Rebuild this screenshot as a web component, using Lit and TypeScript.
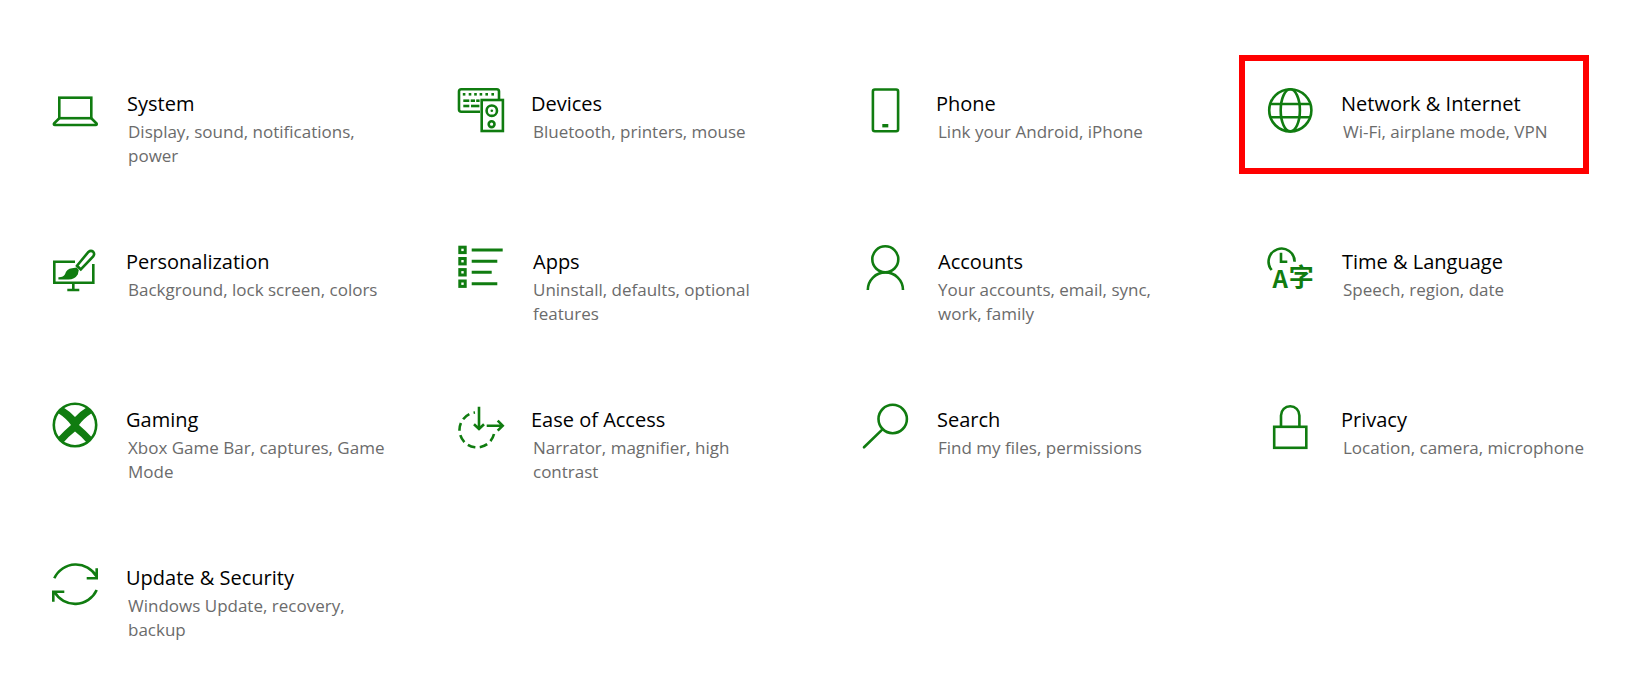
import { LitElement, html, css, svg } from "lit";
import { customElement } from "lit/decorators.js";

const icons = {
  system: svg`<rect x="9.3" y="12.7" width="32" height="20.5"/><path d="M9.3 33.2 4.2 38.2Q3.2 40 5 40H45.6Q47.4 40 46.4 38.2L41.3 33.2"/>`,
  devices: svg`<path d="M25 26.7H6.2Q4 26.7 4 24.5V6.5Q4 4.3 6.2 4.3H41.8Q44 4.3 44 6.5V14"/><rect x="26.7" y="15" width="21.2" height="31"/><circle cx="36.8" cy="25.7" r="5.2"/><circle cx="36.6" cy="39.2" r="2.9"/>
    <g class="fill"><rect x="7.8" y="8" width="2.6" height="2.6"/><rect x="13.7" y="8" width="2.6" height="2.6"/><rect x="19.2" y="8" width="2.6" height="2.6"/><rect x="24.6" y="8" width="2.6" height="2.6"/><rect x="30.4" y="8" width="2.6" height="2.6"/><rect x="36.4" y="8" width="2.6" height="2.6"/><rect x="8.3" y="14.4" width="6" height="2.6"/><rect x="15.7" y="14.4" width="4.3" height="2.6"/><rect x="21.2" y="14.4" width="3.4" height="2.6"/><rect x="8.3" y="19.7" width="6" height="2.6"/><rect x="16" y="19.7" width="8.4" height="2.6"/><circle cx="36.8" cy="25.7" r="1.3"/></g>`,
  phone: svg`<rect x="12.9" y="4.5" width="25.2" height="41.8" rx="2"/><rect class="fill" x="22.3" y="39" width="6" height="3.4"/>`,
  network: svg`<circle cx="25.3" cy="25.3" r="21.1"/><ellipse cx="25.3" cy="25.3" rx="9.6" ry="21.1"/><path d="M5.4 19H45.2M5.4 32.3H45.2"/>`,
  personalization: svg`<path d="M25 18.7H4.3V39.7H43.3V21M23.3 40V47M17.3 47H29.3"/><path d="M27 22.8 38.4 8.9Q41 6.7 43.2 8.8 45 11 43.2 13.4L30.8 26.5Z"/><path class="fill" d="M8.4 34.2Q13.4 34.4 15 31.2 16.6 25.5 22 25.2L26.7 24.5 28.8 27 27.8 31.5Q24.5 36.8 18 36.6H8.4Z"/>`,
  apps: svg`<g class="thick"><rect x="4.8" y="4.2" width="5.4" height="5.4"/><rect x="4.8" y="15.5" width="5.4" height="5.4"/><rect x="4.8" y="26.6" width="5.4" height="5.4"/><rect x="4.8" y="38" width="5.4" height="5.4"/><path d="M16.7 7H47.7M16.7 18.3H42.3M16.7 29.3H36.7M16.7 40.7H42.3"/></g>`,
  accounts: svg`<circle cx="25.3" cy="16.3" r="13"/><path d="M7.8 47A17.6 17.6 0 0 1 43 47"/>`,
  time: svg`<path d="M6.7 27A13 13 0 1 1 29.6 18.7M16 9.7V18.7H22.3"/><text class="glyph" x="7.6" y="45.2" font-size="24">A</text><text class="glyph" x="23.8" y="43" font-size="25">字</text>`,
  gaming: svg`<circle cx="25" cy="24" r="21.2"/><path class="fill" d="M25 16Q20 10.5 13.5 6.5L8 12Q16.5 17.5 21 24 14.5 29.5 8 36.5L13 42Q19 35 25 30.5 31 35 37 42L42 36.5Q35.5 29.5 29 24 33.5 17.5 42 12L36.5 6.5Q30 10.5 25 16Z"/>`,
  ease: svg`<path stroke-dasharray="8 4.4" d="M39 33A17.5 17.5 0 1 1 20 11.5"/><path d="M24 5.7V27.3M19 23.3 24 28 29 23.3M31.7 24.7H47.3M42.7 19.7 47.7 24.7 42.7 29.7"/>`,
  search: svg`<circle cx="32.7" cy="18" r="14.2"/><path stroke-linecap="round" d="M22.2 28.6 4 46.3"/>`,
  privacy: svg`<rect x="9.2" y="25.8" width="32.1" height="21"/><path d="M16 25.8V14.4A9.2 9.2 0 0 1 34.4 14.4V25.8"/>`,
  update: svg`<path d="M4.3 19.3A23.8 23.8 0 0 1 46.7 17.7M46.7 9.3V19.3H36.7M46.7 31A23.8 23.8 0 0 1 4.3 32.7M14.3 32.7H3.3V42.7"/>`,
};

type Item = { icon: keyof typeof icons; title: string; lines: string[]; selected?: boolean; dx?: number };

const items: Item[] = [
  { icon: "system", title: "System", lines: ["Display, sound, notifications,", "power"], dx: 1 },
  { icon: "devices", title: "Devices", lines: ["Bluetooth, printers, mouse"] },
  { icon: "phone", title: "Phone", lines: ["Link your Android, iPhone"] },
  { icon: "network", title: "Network & Internet", lines: ["Wi-Fi, airplane mode, VPN"], selected: true },
  { icon: "personalization", title: "Personalization", lines: ["Background, lock screen, colors"] },
  { icon: "apps", title: "Apps", lines: ["Uninstall, defaults, optional", "features"], dx: 2 },
  { icon: "accounts", title: "Accounts", lines: ["Your accounts, email, sync,", "work, family"], dx: 2 },
  { icon: "time", title: "Time & Language", lines: ["Speech, region, date"], dx: 1 },
  { icon: "gaming", title: "Gaming", lines: ["Xbox Game Bar, captures, Game", "Mode"] },
  { icon: "ease", title: "Ease of Access", lines: ["Narrator, magnifier, high", "contrast"] },
  { icon: "search", title: "Search", lines: ["Find my files, permissions"], dx: 1 },
  { icon: "privacy", title: "Privacy", lines: ["Location, camera, microphone"] },
  { icon: "update", title: "Update & Security", lines: ["Windows Update, recovery,", "backup"] },
];

@customElement("app-root")
export class AppRoot extends LitElement {
  static styles = css`
    :host {
      display: block;
      min-height: 696px;
      background: #fff;
      font-family: "Open Sans", "Noto Sans", sans-serif;
    }
    .grid {
      display: grid;
      grid-template-columns: repeat(4, 405px);
      grid-auto-rows: 158px;
      padding: 85px 0 0 50px;
    }
    .item {
      position: relative;
      display: flex;
      align-items: flex-start;
      gap: 26px;
    }
    .item.selected::after {
      content: "";
      position: absolute;
      left: -26px;
      top: -30px;
      width: 350px;
      height: 119px;
      box-sizing: border-box;
      border: 6px solid #ff0000;
    }
    svg.icon {
      flex: none;
      width: 50px;
      height: 50px;
      overflow: visible;
      fill: none;
      stroke: #107c10;
      stroke-width: 2.6;
    }
    svg .fill { fill: #107c10; stroke: none; }
    svg .thick { stroke-width: 3; }
    svg .glyph {
      fill: #107c10;
      stroke: none;
      font-family: "Noto Sans CJK SC", "Noto Sans", sans-serif;
      font-weight: 700;
    }
    .text { padding-top: 5px; white-space: nowrap; }
    .title {
      font-size: 20px;
      line-height: 28px;
      color: #000;
    }
    .sub {
      margin: 2px 0 0 2px;
      font-size: 17px;
      line-height: 24px;
      color: #6b6b6b;
    }
  `;

  render() {
    return html`<div class="grid">
      ${items.map(
        (it) => html`<div class="item ${it.selected ? "selected" : ""}">
          <svg class="icon" viewBox="0 0 50 50">${icons[it.icon]}</svg>
          <div class="text">
            <div class="title" style="margin-left:${it.dx ?? 0}px">${it.title}</div>
            <div class="sub">${it.lines.map((l) => html`<div>${l}</div>`)}</div>
          </div>
        </div>`
      )}
    </div>`;
  }
}
